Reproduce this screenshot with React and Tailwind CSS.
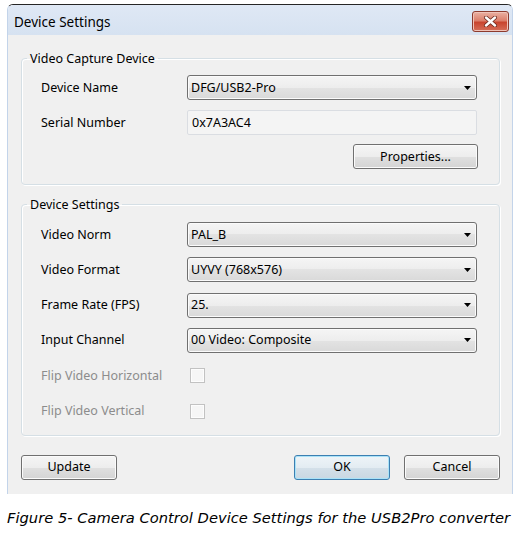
import React from "react";

const UI = { fontFamily: '"Noto Sans", "Open Sans", sans-serif' };

function Arrow() {
  return (
    <svg width="7" height="4" viewBox="0 0 7 4" className="block">
      <polygon points="0,0 7,0 3.5,4" fill="#000" />
    </svg>
  );
}

function Combo({ value }) {
  return (
    <div className="h-[25px] w-[290px] flex items-center justify-between rounded-[3px] border border-[#707070] bg-[linear-gradient(#f5f5f5,#ededed_50%,#e3e3e3_50%,#d9d9d9)] shadow-[inset_0_0_0_1px_#fbfbfb] pl-[3px] pr-[5px]">
      <span className="text-[12.5px] leading-[16px] text-black">{value}</span>
      <Arrow />
    </div>
  );
}

function Button({ children, w = "w-[96px]", primary = false }) {
  return (
    <div
      className={
        "h-[25px] flex items-center justify-center rounded-[3px] border text-[12.5px] leading-[16px] text-black " +
        w +
        " " +
        (primary
          ? "border-[#3c7fb1] bg-[linear-gradient(#eef4f8,#e3ecf2_50%,#d4e0e9_50%,#c9d7e2)] shadow-[inset_0_0_0_1px_#a9e2f8]"
          : "border-[#707070] bg-[linear-gradient(#f5f5f5,#ededed_50%,#e0e0e0_50%,#d4d4d4)] shadow-[inset_0_0_0_1px_#fbfbfb]")
      }
    >
      {children}
    </div>
  );
}

function Row({ label, disabled, children }) {
  return (
    <div className="h-[25px] flex items-center">
      <div
        className={
          "w-[146px] text-[12.5px] leading-[16px] " +
          (disabled ? "text-[#8c8c8c]" : "text-black")
        }
      >
        {label}
      </div>
      {children}
    </div>
  );
}

function Check() {
  return (
    <div className="ml-[3px] w-[15px] h-[15px] border border-[#c2c2c2] bg-[#f6f6f6] shadow-[inset_0_0_0_1px_#fdfdfd]" />
  );
}

function Group({ title, children, className = "" }) {
  return (
    <fieldset
      className={
        "m-0 p-0 border border-[#d5dfe5] rounded-[4px] shadow-[inset_1px_1px_0_#ffffff,1px_1px_0_#ffffff] " +
        className
      }
    >
      <legend className="ml-[5px] px-[3px] text-[12.5px] leading-[17px] text-black">
        {title}
      </legend>
      {children}
    </fieldset>
  );
}

export default function App() {
  return (
    <div className="w-[521px] h-[536px] bg-white overflow-hidden" style={UI}>
      <div className="pt-[4px] pl-[7px]">
        <div className="w-[506px] border-t border-t-[#262626] border-x border-x-[#c3d4ea] rounded-t-[6px] overflow-hidden">
          {/* Title bar */}
          <div className="h-[30px] flex items-start justify-between pl-[6px] pr-[3px] bg-[linear-gradient(#dfe8f5,#d6e2f1)]">
            <div className="pt-[8px] text-[13.5px] leading-[18px] text-black">Device Settings</div>
            <div className="mt-[6px] w-[37px] h-[21px] rounded-[3px] border border-[#8d3b2e] bg-[linear-gradient(#eab1a3,#dc7f6b_45%,#c9452f_55%,#d66f59)] shadow-[inset_0_0_0_1px_#f0c3b8] flex items-center justify-center">
              <svg width="15" height="11" viewBox="0 0 15 11">
                <path d="M3 1.5 L12 9.5 M12 1.5 L3 9.5" stroke="#6b2a1f" strokeWidth="4" strokeLinecap="round" />
                <path d="M3 1.5 L12 9.5 M12 1.5 L3 9.5" stroke="#ffffff" strokeWidth="2.4" strokeLinecap="round" />
              </svg>
            </div>
          </div>
          {/* Content */}
          <div className="h-[459px] bg-[#f0f0f0] pl-[13px] pr-[12px] pt-[15px]">
            <Group title="Video Capture Device">
              <div className="pl-[19px] pt-[8px] pb-[15px] flex flex-col">
                <Row label="Device Name">
                  <Combo value="DFG/USB2-Pro" />
                </Row>
                <div className="mt-[10px]">
                  <Row label="Serial Number">
                    <div className="h-[25px] w-[290px] flex items-center border border-[#dadde2] rounded-[2px] bg-[#f4f4f4] pl-[4px] text-[12.5px] leading-[16px] text-black">
                      0x7A3AC4
                    </div>
                  </Row>
                </div>
                <div className="mt-[9px] flex justify-end pr-[21px]">
                  <Button w="w-[125px]">Properties...</Button>
                </div>
              </div>
            </Group>
            <Group title="Device Settings" className="mt-[11px]">
              <div className="pl-[19px] pt-[9px] pb-[11px] flex flex-col gap-[10.33px]">
                <Row label="Video Norm">
                  <Combo value="PAL_B" />
                </Row>
                <Row label="Video Format">
                  <Combo value="UYVY (768x576)" />
                </Row>
                <Row label="Frame Rate (FPS)">
                  <Combo value="25." />
                </Row>
                <Row label="Input Channel">
                  <Combo value="00 Video: Composite" />
                </Row>
                <Row label="Flip Video Horizontal" disabled>
                  <Check />
                </Row>
                <Row label="Flip Video Vertical" disabled>
                  <Check />
                </Row>
              </div>
            </Group>
            <div className="mt-[19px] flex items-center">
              <Button>Update</Button>
              <div className="flex-1" />
              <Button primary>OK</Button>
              <div className="w-[14px]" />
              <Button>Cancel</Button>
            </div>
          </div>
        </div>
      </div>
      <div
        className="mt-[15px] pl-[7px] text-[14.7px] leading-[18px] italic text-black whitespace-nowrap"
        style={{ fontFamily: '"DejaVu Sans", Verdana, sans-serif' }}
      >
        Figure 5- Camera Control Device Settings for the USB2Pro converter
      </div>
    </div>
  );
}
